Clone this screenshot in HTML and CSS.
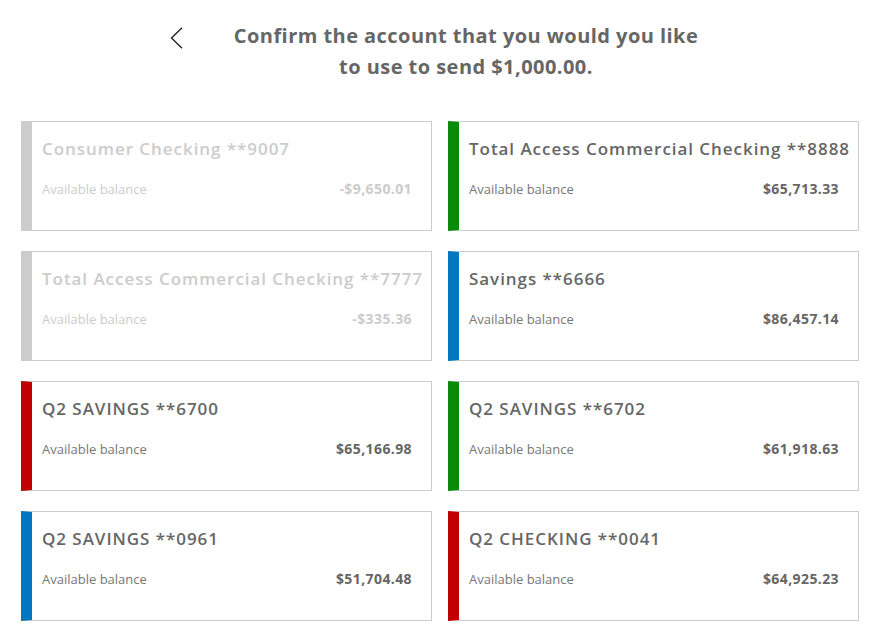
FILE: index.html
```html
<!DOCTYPE html>
<html lang="en">
<head>
<meta charset="utf-8">
<title>Confirm account</title>
<link rel="stylesheet" href="styles.css">
</head>
<body>
<header class="header">
  <button class="back" aria-label="Back">
    <svg width="13" height="22" viewBox="0 0 13 22"><path d="M12 0.8 L1.5 11 L12 21.2" fill="none" stroke="#222" stroke-width="1.4"/></svg>
  </button>
  <h1 class="title">Confirm the account that you would you like<br>to use to send $1,000.00.</h1>
</header>
<main class="grid">
  <div class="card disabled">
    <div class="name">Consumer Checking **9007</div>
    <div class="row"><span class="label">Available balance</span><span class="amount">-$9,650.01</span></div>
  </div>
  <div class="card green">
    <div class="name">Total Access Commercial Checking **8888</div>
    <div class="row"><span class="label">Available balance</span><span class="amount">$65,713.33</span></div>
  </div>
  <div class="card disabled">
    <div class="name">Total Access Commercial Checking **7777</div>
    <div class="row"><span class="label">Available balance</span><span class="amount">-$335.36</span></div>
  </div>
  <div class="card blue">
    <div class="name">Savings **6666</div>
    <div class="row"><span class="label">Available balance</span><span class="amount">$86,457.14</span></div>
  </div>
  <div class="card red">
    <div class="name">Q2 SAVINGS **6700</div>
    <div class="row"><span class="label">Available balance</span><span class="amount">$65,166.98</span></div>
  </div>
  <div class="card green">
    <div class="name">Q2 SAVINGS **6702</div>
    <div class="row"><span class="label">Available balance</span><span class="amount">$61,918.63</span></div>
  </div>
  <div class="card blue">
    <div class="name">Q2 SAVINGS **0961</div>
    <div class="row"><span class="label">Available balance</span><span class="amount">$51,704.48</span></div>
  </div>
  <div class="card red">
    <div class="name">Q2 CHECKING **0041</div>
    <div class="row"><span class="label">Available balance</span><span class="amount">$64,925.23</span></div>
  </div>
</main>
</body>
</html>
```
FILE: styles.css
```css
* { box-sizing: border-box; }
html, body { margin: 0; background: #fff; }
body { font-family: "Open Sans", "Liberation Sans", sans-serif; color: #666; }

.header {
  display: flex;
  justify-content: center;
  align-items: flex-start;
  gap: 51px;
  padding-top: 20px;
  padding-right: 5px;
  height: 121px;
}
.back {
  border: 0;
  background: none;
  padding: 0;
  margin-top: 7px;
  cursor: pointer;
  display: flex;
}
.title {
  margin: 0;
  font-size: 20px;
  font-weight: 700;
  line-height: 31px;
  letter-spacing: 0.45px;
  text-align: center;
  color: #666;
}

.grid {
  display: grid;
  grid-template-columns: minmax(0, 1fr) minmax(0, 1fr);
  column-gap: 16px;
  row-gap: 20px;
  padding: 0 14px 0 21px;
}
.card {
  height: 110px;
  border: 1px solid #ccc;
  border-left-width: 11px;
  padding: 15px 19px 0 10px;
  background: #fff;
  overflow: hidden;
}
.card.disabled { border-left-color: #ccc; }
.card.green { border-left-color: #0a8a0a; }
.card.blue { border-left-color: #0077c0; }
.card.red { border-left-color: #c00000; }

.name {
  font-size: 17px;
  font-weight: 600;
  letter-spacing: 0.95px;
  line-height: 24px;
  white-space: nowrap;
}
.row {
  display: flex;
  justify-content: space-between;
  align-items: baseline;
  margin-top: 18px;
}
.label {
  font-size: 13px;
  color: #777;
}
.amount {
  font-size: 14px;
  font-weight: 700;
  letter-spacing: 0.4px;
  color: #666;
}
.disabled .name, .disabled .label, .disabled .amount { color: #ccc; }
```
